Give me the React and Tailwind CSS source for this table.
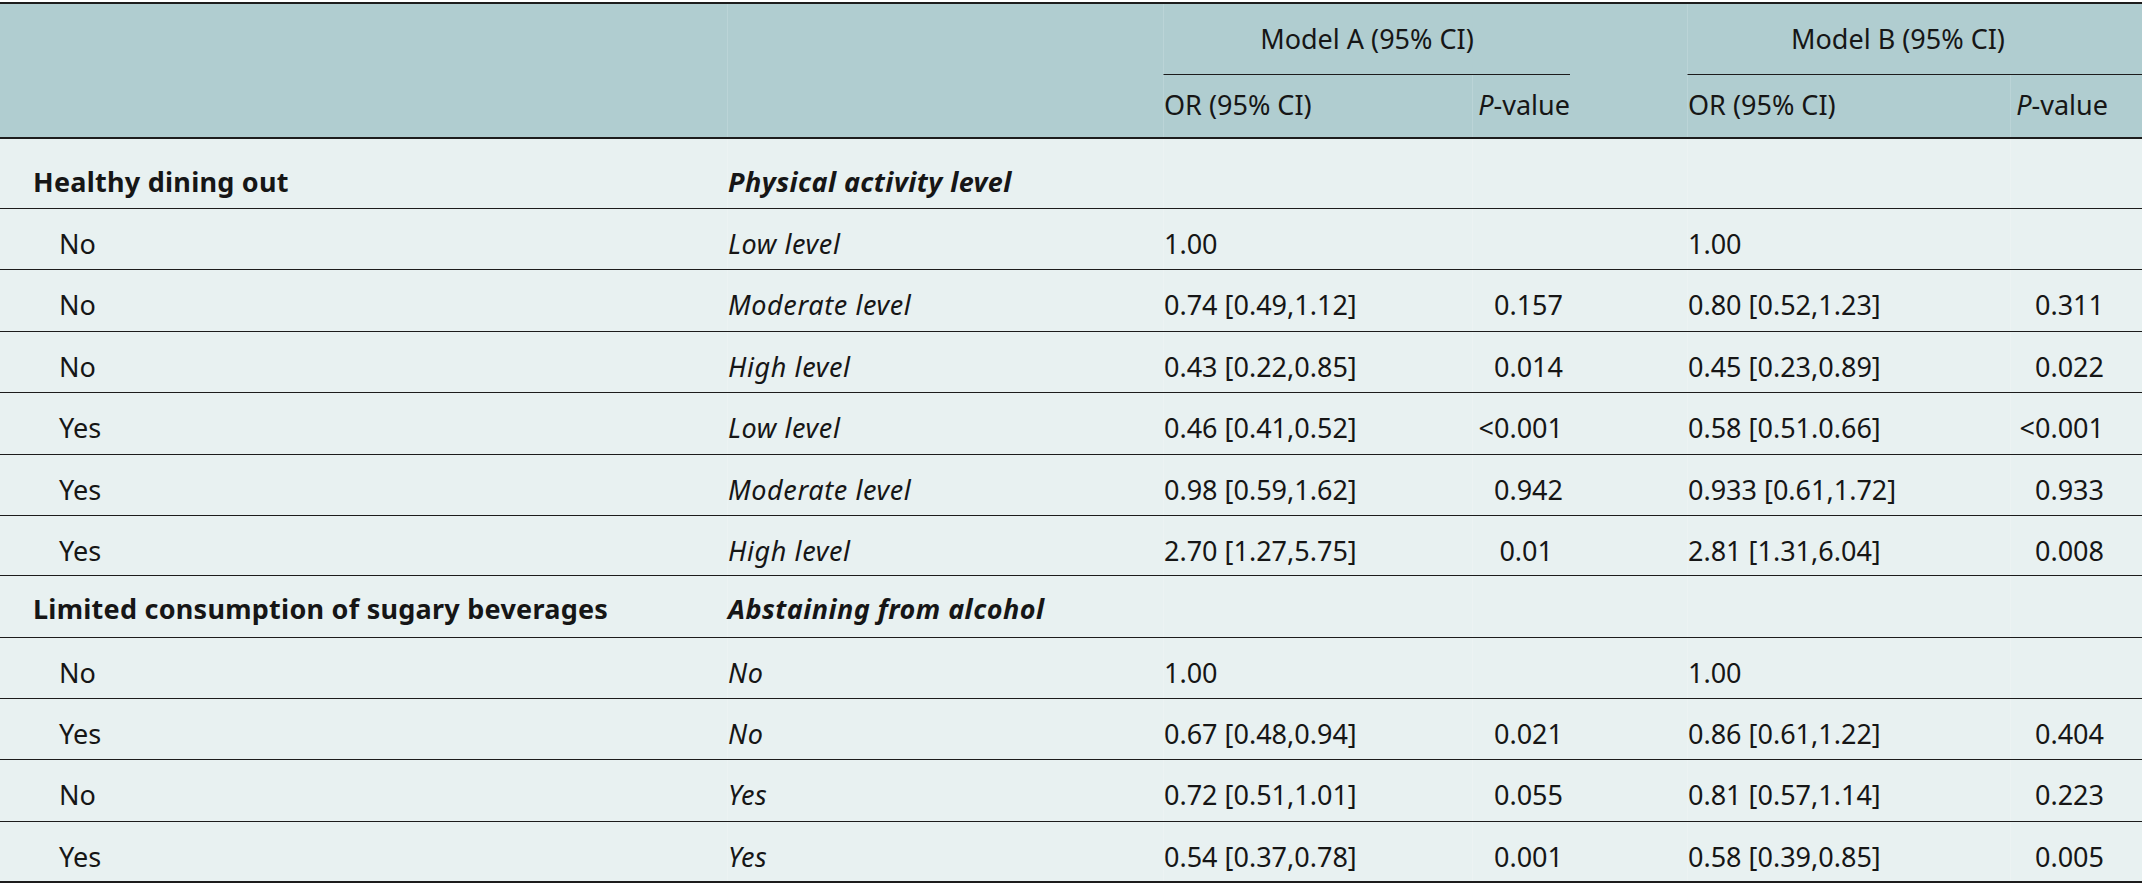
const cols = "grid grid-cols-[727px_436px_309px_98px_117px_323px_98px_1fr]";

const groups = [
  {
    label: "Healthy dining out",
    factor: "Physical activity level",
    h: "h-[70px]",
    pt: "pt-[25px]",
    rows: [
      { a: "No", b: "Low level", orA: "1.00", pA: "", orB: "1.00", pB: "", h: "h-[61px]" },
      { a: "No", b: "Moderate level", orA: "0.74 [0.49,1.12]", pA: "0.157", orB: "0.80 [0.52,1.23]", pB: "0.311", h: "h-[62px]" },
      { a: "No", b: "High level", orA: "0.43 [0.22,0.85]", pA: "0.014", orB: "0.45 [0.23,0.89]", pB: "0.022", h: "h-[61px]" },
      { a: "Yes", b: "Low level", orA: "0.46 [0.41,0.52]", pA: "<0.001", orB: "0.58 [0.51.0.66]", pB: "<0.001", h: "h-[62px]" },
      { a: "Yes", b: "Moderate level", orA: "0.98 [0.59,1.62]", pA: "0.942", orB: "0.933 [0.61,1.72]", pB: "0.933", h: "h-[61px]" },
      { a: "Yes", b: "High level", orA: "2.70 [1.27,5.75]", pA: "0.01", orB: "2.81 [1.31,6.04]", pB: "0.008", h: "h-[60px]", shortP: true },
    ],
  },
  {
    label: "Limited consumption of sugary beverages",
    factor: "Abstaining from alcohol",
    h: "h-[62px]",
    pt: "pt-[15px]",
    rows: [
      { a: "No", b: "No", orA: "1.00", pA: "", orB: "1.00", pB: "", h: "h-[61px]" },
      { a: "Yes", b: "No", orA: "0.67 [0.48,0.94]", pA: "0.021", orB: "0.86 [0.61,1.22]", pB: "0.404", h: "h-[61px]" },
      { a: "No", b: "Yes", orA: "0.72 [0.51,1.01]", pA: "0.055", orB: "0.81 [0.57,1.14]", pB: "0.223", h: "h-[62px]" },
      { a: "Yes", b: "Yes", orA: "0.54 [0.37,0.78]", pA: "0.001", orB: "0.58 [0.39,0.85]", pB: "0.005", h: "h-[61px]" },
    ],
  },
];

const line = "border-l border-white/20";
const hline = "border-l border-white/15";

function GroupRow({ g }) {
  return (
    <div className={`${cols} ${g.h} border-b border-[#1c1c1c]`}>
      <div className={`${g.pt} pl-[33px] font-bold tracking-[0.25px] whitespace-nowrap`}>{g.label}</div>
      <div className={`${g.pt} ${line} font-bold italic tracking-[0.45px] whitespace-nowrap`}>{g.factor}</div>
      <div className={line}></div>
      <div className={line}></div>
      <div></div>
      <div className={line}></div>
      <div className={line}></div>
      <div></div>
    </div>
  );
}

function DataRow({ r, last }) {
  return (
    <div className={`${cols} ${r.h} ${last ? "border-b-2" : "border-b"} border-[#1c1c1c]`}>
      <div className="pt-[17px] pl-[59px]">{r.a}</div>
      <div className={`pt-[17px] ${line} italic tracking-[0.6px]`}>{r.b}</div>
      <div className={`pt-[17px] ${line} whitespace-nowrap`}>{r.orA}</div>
      <div className={`pt-[17px] ${line} text-right ${r.shortP ? "pr-[17px]" : "pr-[7px]"}`}>{r.pA}</div>
      <div></div>
      <div className={`pt-[17px] ${line} whitespace-nowrap`}>{r.orB}</div>
      <div className={`pt-[17px] ${line} text-right pr-[4px]`}>{r.pB}</div>
      <div></div>
    </div>
  );
}

export default function App() {
  return (
    <div className="w-[2142px] h-[887px] bg-white pt-[2px] font-['Noto_Sans',sans-serif] text-[27px] leading-[36px] text-[#161616]">
      <div className="border-t-2 border-[#1c1c1c]">
        {/* header */}
        <div className="bg-[#b0cdd0] border-b-2 border-[#1c1c1c]">
          <div className={`${cols} h-[71px]`}>
            <div></div>
            <div className={hline}></div>
            <div className={`col-span-2 ${hline} border-b border-b-[#1c1c1c] pt-[17px] text-center whitespace-nowrap`}>
              Model A (95% CI)
            </div>
            <div></div>
            <div className={`col-span-3 ${hline} border-b border-b-[#1c1c1c] pt-[17px] pr-[34px] text-center whitespace-nowrap`}>
              Model B (95% CI)
            </div>
          </div>
          <div className={`${cols} h-[62px]`}>
            <div></div>
            <div className={hline}></div>
            <div className={`${hline} pt-[12px] whitespace-nowrap`}>OR (95% CI)</div>
            <div className={`${hline} pt-[12px] text-right whitespace-nowrap`}>
              <span className="italic">P</span>-value
            </div>
            <div></div>
            <div className={`${hline} pt-[12px] whitespace-nowrap`}>OR (95% CI)</div>
            <div className={`${hline} pt-[12px] text-right whitespace-nowrap`}>
              <span className="italic">P</span>-value
            </div>
            <div></div>
          </div>
        </div>
        {/* body */}
        <div className="bg-[#e8f1f1]">
          {groups.map((g, gi) => (
            <div key={g.label}>
              <GroupRow g={g} />
              {g.rows.map((r, i) => (
                <DataRow key={i} r={r} last={gi === groups.length - 1 && i === g.rows.length - 1} />
              ))}
            </div>
          ))}
        </div>
      </div>
    </div>
  );
}
